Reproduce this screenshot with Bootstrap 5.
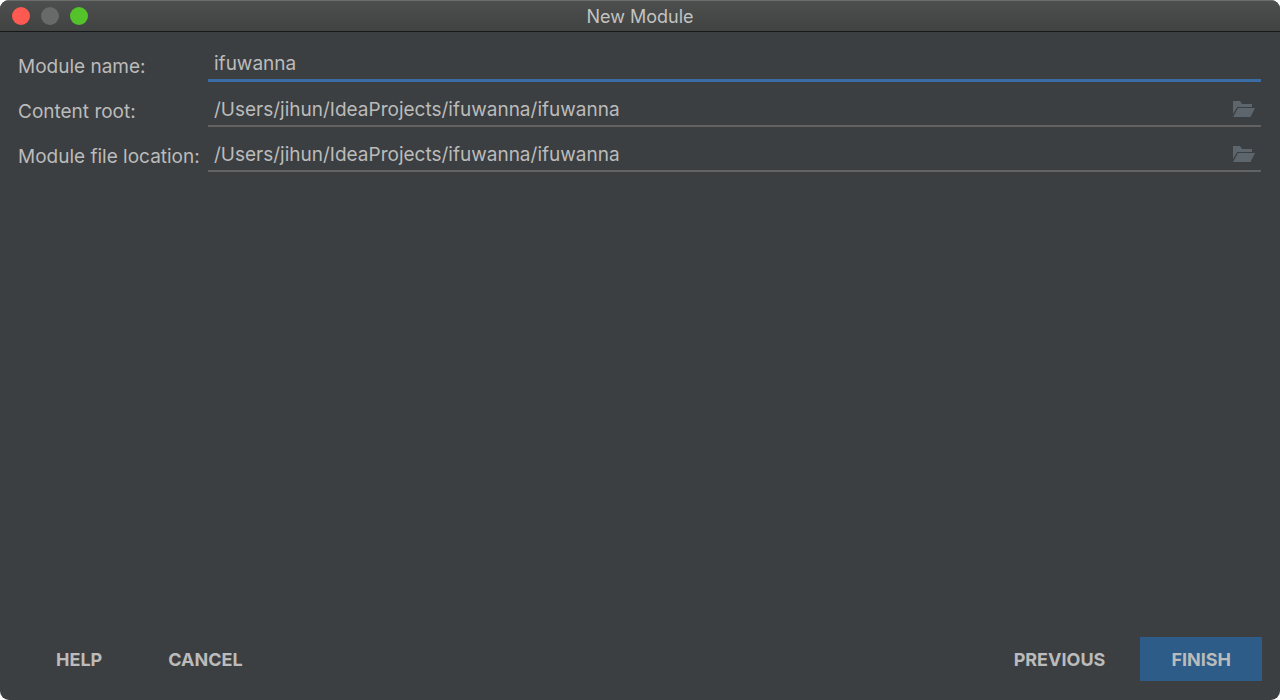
<!DOCTYPE html>
<html lang="en">
<head>
<meta charset="utf-8">
<meta name="viewport" content="width=device-width, initial-scale=1">
<title>New Module</title>
<link href="https://cdn.jsdelivr.net/npm/bootstrap@5.3.0/dist/css/bootstrap.min.css" rel="stylesheet">
<style>
  body { background: #fff; color: #bbb; font-family: Inter, "Liberation Sans", sans-serif; font-size: 19px; line-height: 24px; }
  .dialog { background: #3c3f41; border-radius: 9px; }
  .titlebar { height: 32px; padding: 0 12px; background: linear-gradient(#4d4f4e, #414342); border-top: 1px solid #6b6d6c; border-bottom: 1px solid #161718; color: #c3c3c1; font-size: 18px; }
  .lights { gap: 11px; }
  .light { width: 18px; height: 18px; background: #686a69; }
  .light-close { background: #ff5a52; }
  .light-zoom { background: #53c22b; }
  .window-title { padding-top: 2px; }
  .fields { padding: 5px 19px 0 18px; }
  .field-row { height: 45px; }
  .field-row label { width: 190px; padding-top: 15px; white-space: nowrap; }
  .line { border-bottom: 2px solid #626262; padding-top: 11px; }
  .line-active { border-bottom: 3px solid #3a6da5; }
  .line input { background: none; border: 0; color: inherit; padding: 0 0 0 6px; height: 30px; outline: 0; font-size: 19px; }
  .browse { background: none; border: 0; padding: 0 6px 0 0; line-height: 0; }
  .actions { padding: 0 18px 19px 25px; gap: 4px; }
  .act { height: 44px; padding: 2px 31px 0; border: 0; border-radius: 0; color: #bbb; font-size: 18px; font-weight: 700; line-height: 42px; }
  .act-main, .act-main:hover { background: #2d5c88; color: #bbb; }
</style>
</head>
<body>
<div class="dialog d-flex flex-column min-vh-100 overflow-hidden">
  <header class="titlebar d-flex align-items-center">
    <div class="lights d-flex col">
      <span class="light light-close rounded-circle"></span>
      <span class="light rounded-circle"></span>
      <span class="light light-zoom rounded-circle"></span>
    </div>
    <div class="window-title">New Module</div>
    <div class="col"></div>
  </header>

  <form class="d-flex flex-column flex-grow-1">
    <div class="fields flex-grow-1">
      <div class="field-row d-flex">
        <label class="d-flex align-items-center" for="name">Module name:</label>
        <div class="line line-active d-flex align-items-center flex-grow-1">
          <input class="flex-grow-1" id="name" type="text" value="ifuwanna">
        </div>
      </div>
      <div class="field-row d-flex">
        <label class="d-flex align-items-center" for="root">Content root:</label>
        <div class="line d-flex align-items-center flex-grow-1">
          <input class="flex-grow-1" id="root" type="text" value="/Users/jihun/IdeaProjects/ifuwanna/ifuwanna">
          <button class="browse" type="button" aria-label="Browse content root">
            <svg width="22" height="16" viewBox="0 0 22 16" fill="#5c666c"><path d="M0 0H7L9 3H19V6H4.300L0 13Z"/><path d="M5 7H22L17.500 16H0Z"/></svg>
          </button>
        </div>
      </div>
      <div class="field-row d-flex">
        <label class="d-flex align-items-center" for="location">Module file location:</label>
        <div class="line d-flex align-items-center flex-grow-1">
          <input class="flex-grow-1" id="location" type="text" value="/Users/jihun/IdeaProjects/ifuwanna/ifuwanna">
          <button class="browse" type="button" aria-label="Browse module file location">
            <svg width="22" height="16" viewBox="0 0 22 16" fill="#5c666c"><path d="M0 0H7L9 3H19V6H4.300L0 13Z"/><path d="M5 7H22L17.500 16H0Z"/></svg>
          </button>
        </div>
      </div>
    </div>
    <footer class="actions d-flex">
      <button class="btn act" type="button">HELP</button>
      <button class="btn act me-auto" type="button">CANCEL</button>
      <button class="btn act" type="button">PREVIOUS</button>
      <button class="btn act act-main" type="button">FINISH</button>
    </footer>
  </form>
</div>
<script src="https://cdn.jsdelivr.net/npm/bootstrap@5.3.0/dist/js/bootstrap.bundle.min.js"></script>
</body>
</html>
